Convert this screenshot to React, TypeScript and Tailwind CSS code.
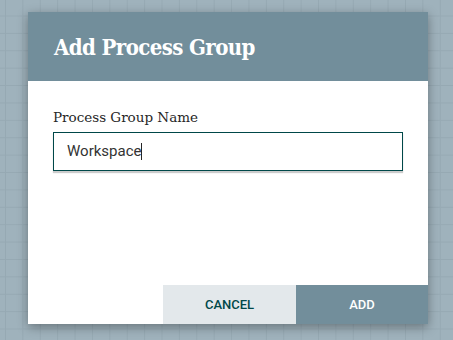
import React from "react";

export default function App() {
  return (
    <div className="w-[453px] h-[340px] overflow-hidden bg-[#9fb2bc] bg-[linear-gradient(to_right,#96a9b3_1px,transparent_1px),linear-gradient(to_bottom,#96a9b3_1px,transparent_1px)] bg-[size:17.4px_17.4px] bg-[position:5px_15.5px] pt-[12px] pl-[28px]">
      <div className="w-[400px] h-[312px] bg-white flex flex-col shadow-[0_3px_10px_rgba(0,0,0,0.35)]">
        <div className="h-[69px] bg-[#728e9b] flex items-center pl-[26px]">
          <h1 className="text-white font-bold text-[22px] leading-none tracking-[-0.6px] font-['DejaVu_Serif_Condensed','DejaVu_Serif',serif]">
            Add Process Group
          </h1>
        </div>
        <div className="flex-1 px-[25px] pt-[26px]">
          <div className="text-[13.5px] leading-[20px] text-[#262626] font-['DejaVu_Serif',serif]">
            Process Group Name
          </div>
          <div className="mt-[5px] h-[39px] border border-[#004849] shadow-[0_2px_1px_rgba(0,0,0,0.2)] flex items-center pl-[13px]">
            <span className="text-[15px] text-[#333333] font-['Roboto',sans-serif]">Workspace</span>
            <span className="w-px h-[17px] bg-[#262626]"></span>
          </div>
        </div>
        <div className="flex justify-end">
          <button className="w-[133px] h-[39px] bg-[#e3e8eb] text-[#004849] text-[13px] font-medium font-['Roboto',sans-serif]">
            CANCEL
          </button>
          <button className="w-[132px] h-[39px] bg-[#728e9b] text-white text-[13px] font-medium font-['Roboto',sans-serif]">
            ADD
          </button>
        </div>
      </div>
    </div>
  );
}
